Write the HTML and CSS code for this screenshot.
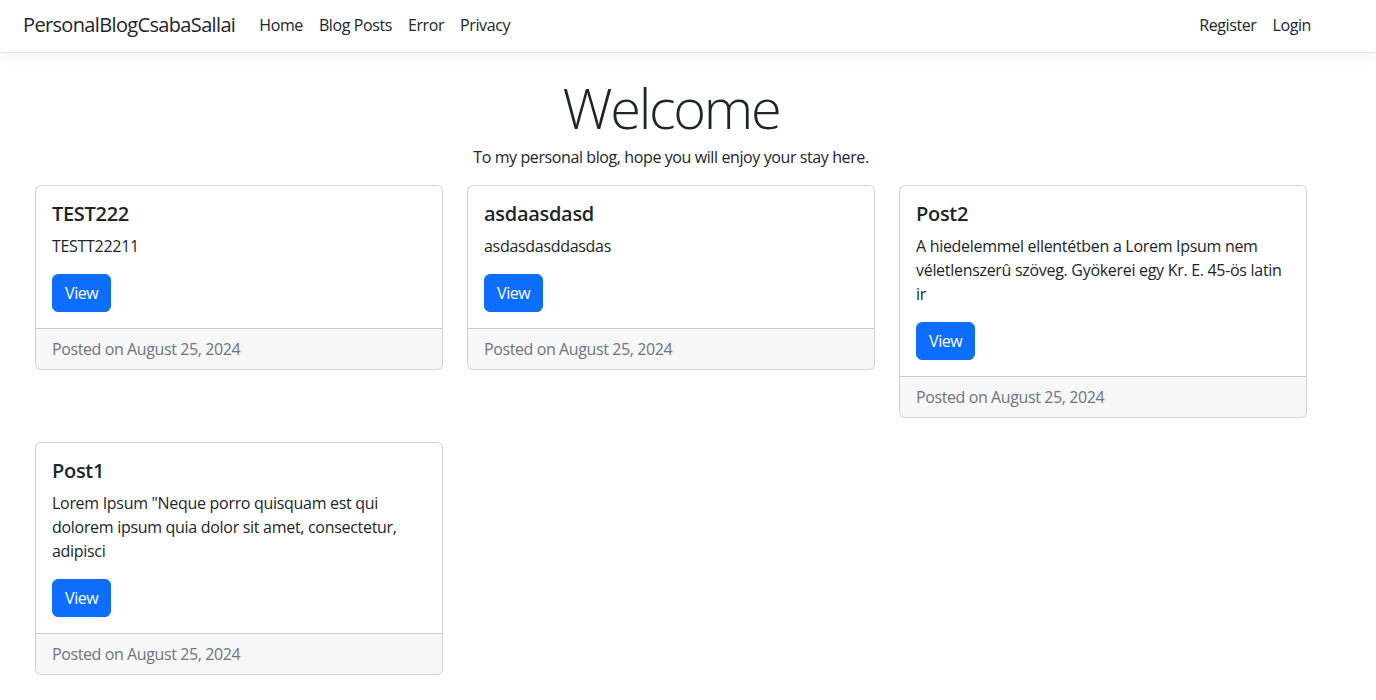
FILE: index.html
```html
<!DOCTYPE html>
<html lang="en">
<head>
<meta charset="utf-8">
<title>PersonalBlogCsabaSallai</title>
<link rel="stylesheet" href="styles.css">
</head>
<body>
<header class="navbar">
  <div class="frame">
    <div class="container nav-inner">
      <a class="brand" href="#">PersonalBlogCsabaSallai</a>
      <ul class="nav nav-main">
        <li><a class="nav-link" href="#">Home</a></li>
        <li><a class="nav-link" href="#">Blog Posts</a></li>
        <li><a class="nav-link" href="#">Error</a></li>
        <li><a class="nav-link" href="#">Privacy</a></li>
      </ul>
      <ul class="nav nav-auth">
        <li><a class="nav-link" href="#">Register</a></li>
        <li><a class="nav-link" href="#">Login</a></li>
      </ul>
    </div>
  </div>
</header>
<div class="frame">
  <main class="container main">
    <div class="intro">
      <h1 class="display">Welcome</h1>
      <p class="lead">To my personal blog, hope you will enjoy your stay here.</p>
    </div>
    <div class="grid">
      <div class="card">
        <div class="card-body">
          <h5 class="card-title">TEST222</h5>
          <p class="card-text">TESTT22211</p>
          <a class="btn" href="#">View</a>
        </div>
        <div class="card-footer">Posted on August 25, 2024</div>
      </div>
      <div class="card">
        <div class="card-body">
          <h5 class="card-title">asdaasdasd</h5>
          <p class="card-text">asdasdasddasdas</p>
          <a class="btn" href="#">View</a>
        </div>
        <div class="card-footer">Posted on August 25, 2024</div>
      </div>
      <div class="card">
        <div class="card-body">
          <h5 class="card-title">Post2</h5>
          <p class="card-text">A hiedelemmel ellentétben a Lorem Ipsum nem véletlenszerû szöveg. Gyökerei egy Kr. E. 45-ös latin ir</p>
          <a class="btn" href="#">View</a>
        </div>
        <div class="card-footer">Posted on August 25, 2024</div>
      </div>
      <div class="card">
        <div class="card-body">
          <h5 class="card-title">Post1</h5>
          <p class="card-text">Lorem Ipsum "Neque porro quisquam est qui dolorem ipsum quia dolor sit amet, consectetur, adipisci</p>
          <a class="btn" href="#">View</a>
        </div>
        <div class="card-footer">Posted on August 25, 2024</div>
      </div>
    </div>
  </main>
</div>
</body>
</html>
```
FILE: styles.css
```css
* { box-sizing: border-box; }
html, body { margin: 0; padding: 0; }
body {
  font-family: "Open Sans", "Noto Sans", sans-serif;
  font-size: 16px;
  line-height: 1.5;
  letter-spacing: -0.4px;
  color: #212529;
  background: #fff;
}
.frame { width: 1342px; }
.container { max-width: 1320px; margin: 0 auto; padding: 0 12px; }
a { text-decoration: none; color: inherit; }

.navbar {
  height: 53px;
  border-bottom: 1px solid #dee2e6;
  box-shadow: 0 .25rem .75rem rgba(0,0,0,.05);
  background: #fff;
  margin-bottom: 16px;
}
.nav-inner { display: flex; align-items: center; height: 50px; }
.brand { font-size: 20px; line-height: 30px; margin-right: 16px; color: #212529; letter-spacing: -0.65px; }
.nav { list-style: none; margin: 0; padding: 0; display: flex; }
.nav-main { flex: 1; }
.nav-link { display: block; padding: 8px; color: #212529; line-height: 24px; }

.intro { text-align: center; padding-top: 1px; }
.display { font-size: 56px; font-weight: 300; line-height: 74px; letter-spacing: -2.3px; margin: 0 0 1px; }
.lead { margin: 0 0 16px; }

.grid {
  display: grid;
  grid-template-columns: repeat(3, 408px);
  column-gap: 24px;
  row-gap: 24px;
  align-items: start;
  padding: 0 12px;
}
.card {
  border: 1px solid rgba(0,0,0,.175);
  border-radius: 6px;
  overflow: hidden;
  background: #fff;
}
.card-body { padding: 16px; }
.card-title { font-size: 20px; font-weight: 600; line-height: 1.2; margin: 0 0 8px; letter-spacing: -0.3px; }
.card-text { margin: 0 0 16px; letter-spacing: -0.3px; }
.btn {
  display: inline-block;
  padding: 6px 12px;
  border: 1px solid #0d6efd;
  border-radius: 6px;
  background: #0d6efd;
  color: #fff;
  line-height: 24px;
}
.card-footer {
  padding: 8px 16px;
  border-top: 1px solid rgba(0,0,0,.175);
  background: #f7f7f7;
  color: #6c757d;
}
```
